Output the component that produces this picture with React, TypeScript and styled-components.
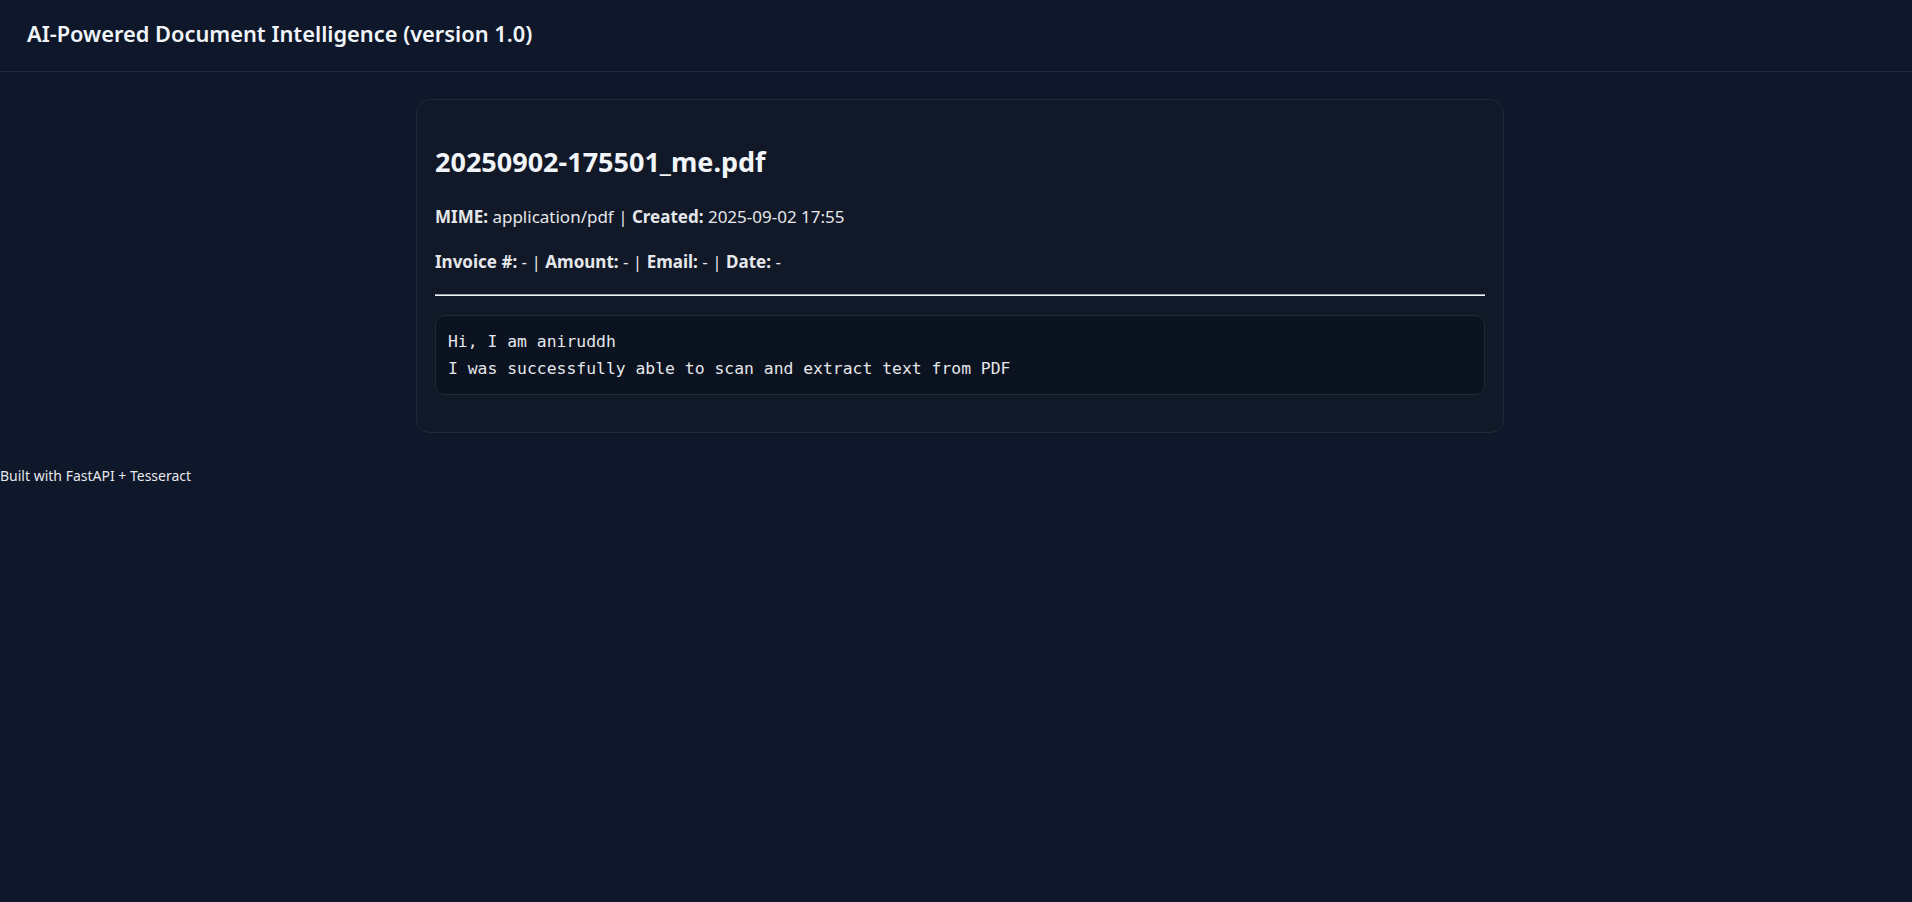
import React from "react";
import styled, { createGlobalStyle } from "styled-components";

const GlobalStyle = createGlobalStyle`
  html, body { margin: 0; padding: 0; background: #0f172a; }
  body {
    font-family: "Noto Sans", "Open Sans", Arial, sans-serif;
    color: #e5e7eb;
  }
`;

const Header = styled.header`
  padding: 20px 27px 23px;
  border-bottom: 1px solid #1e293b;
`;

const AppTitle = styled.h1`
  margin: 0;
  font-size: 21.8px;
  line-height: 28px;
  font-weight: 600;
  color: #f1f5f9;
`;

const Main = styled.main`
  padding: 27px 0 0 8px;
`;

const Card = styled.section`
  box-sizing: border-box;
  width: 1088px;
  margin: 0 auto;
  padding: 18px;
  background: #111827;
  border: 1px solid #1f2937;
  border-radius: 14px;
`;

const FileName = styled.h2`
  margin: 26px 0 0;
  font-size: 27px;
  line-height: 36px;
  font-weight: 700;
  color: #f1f5f9;
`;

const Meta = styled.p<{ $gap: number }>`
  margin: ${(p) => p.$gap}px 0 0;
  font-size: 17px;
  line-height: 24px;
  color: #e5e7eb;

  b { font-weight: 700; }
`;

const Rule = styled.hr`
  margin: 20px 0 0;
  height: 0;
  border: 0;
  border-top: 1px solid #9ca3af;
  border-bottom: 1px solid #f3f4f6;
`;

const TextBox = styled.pre`
  margin: 19px 0 19px;
  padding: 12px;
  background: #0b1220;
  border: 1px solid #1f2937;
  border-radius: 10px;
  font-family: "DejaVu Sans Mono", "Liberation Mono", monospace;
  font-size: 16.4px;
  line-height: 27px;
  color: #e5e7eb;
  white-space: pre-wrap;
`;

const Footer = styled.footer`
  padding-top: 33px;
  font-size: 14px;
  line-height: 20px;
  color: #e5e7eb;
`;

const doc = {
  name: "20250902-175501_me.pdf",
  mime: "application/pdf",
  created: "2025-09-02 17:55",
  invoice: "-",
  amount: "-",
  email: "-",
  date: "-",
  text: "Hi, I am aniruddh\nI was successfully able to scan and extract text from PDF",
};

export default function App() {
  return (
    <>
      <GlobalStyle />
      <Header>
        <AppTitle>AI-Powered Document Intelligence (version 1.0)</AppTitle>
      </Header>
      <Main>
        <Card>
          <FileName>{doc.name}</FileName>
          <Meta $gap={25}>
            <b>MIME:</b> {doc.mime} | <b>Created:</b> {doc.created}
          </Meta>
          <Meta $gap={21}>
            <b>Invoice #:</b> {doc.invoice} | <b>Amount:</b> {doc.amount} |{" "}
            <b>Email:</b> {doc.email} | <b>Date:</b> {doc.date}
          </Meta>
          <Rule />
          <TextBox>{doc.text}</TextBox>
        </Card>
      </Main>
      <Footer>Built with FastAPI + Tesseract</Footer>
    </>
  );
}
